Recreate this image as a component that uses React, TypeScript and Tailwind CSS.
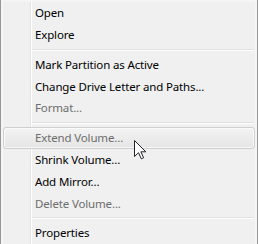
type Item = { label: string; disabled?: boolean; hover?: boolean } | "sep";

const ITEMS: Item[] = [
  { label: "Open" },
  { label: "Explore" },
  "sep",
  { label: "Mark Partition as Active" },
  { label: "Change Drive Letter and Paths..." },
  { label: "Format...", disabled: true },
  "sep",
  { label: "Extend Volume...", disabled: true, hover: true },
  { label: "Shrink Volume..." },
  { label: "Add Mirror..." },
  { label: "Delete Volume...", disabled: true },
  "sep",
  { label: "Properties" },
];

function Cursor() {
  return (
    <svg
      width="13"
      height="20"
      viewBox="0 0 13 20"
      className="pointer-events-none absolute left-[134px] top-[140px]"
    >
      <path
        d="M0.5 0.5 L0.5 16.5 L4.5 12.7 L7.3 18.8 L9.6 17.8 L6.9 11.8 L11.8 11.8 Z"
        fill="#ffffff"
        stroke="#22222e"
        strokeWidth="1"
        strokeLinejoin="miter"
      />
    </svg>
  );
}

export default function App() {
  return (
    <div
      className="relative h-[244px] w-[258px] overflow-hidden bg-[#f0f0f0] text-[11.5px] tracking-[-0.15px]"
      style={{ fontFamily: '"Segoe UI", "Noto Sans", sans-serif' }}
    >
      <div className="flex h-full border-x border-[#979797]">
        <div className="flex h-full w-full border-x-2 border-t-2 border-[#f5f5f5]">
          <div className="relative flex w-full flex-col">
            {/* gutter line */}
            <div className="pointer-events-none absolute bottom-0 left-[27px] top-0 flex">
              <div className="w-px bg-[#e2e3e3]" />
              <div className="w-px bg-white" />
            </div>
            {ITEMS.map((item, i) => {
              if (item === "sep") {
                return (
                  <div key={i} className="flex h-[8px] flex-col pl-[29px] pr-[1px] pt-[3px]">
                    <div className="h-px bg-[#e0e0e0]" />
                    <div className="h-px bg-white" />
                  </div>
                );
              }
              return (
                <div key={i} className="relative flex h-[22px] items-center">
                  {item.hover ? (
                    <div className="absolute inset-y-0 left-0 right-0 rounded-[3px] border border-[#cfcfcf] bg-gradient-to-b from-[#f3f3f3] to-[#e5e5e5] shadow-[inset_0_0_0_1px_rgba(255,255,255,0.7)]" />
                  ) : null}
                  <span
                    className={`relative pl-[32px] leading-none ${
                      item.disabled ? "text-[#6d6d6d]" : "text-black"
                    }`}
                  >
                    {item.label}
                  </span>
                </div>
              );
            })}
          </div>
        </div>
      </div>
      <Cursor />
    </div>
  );
}
